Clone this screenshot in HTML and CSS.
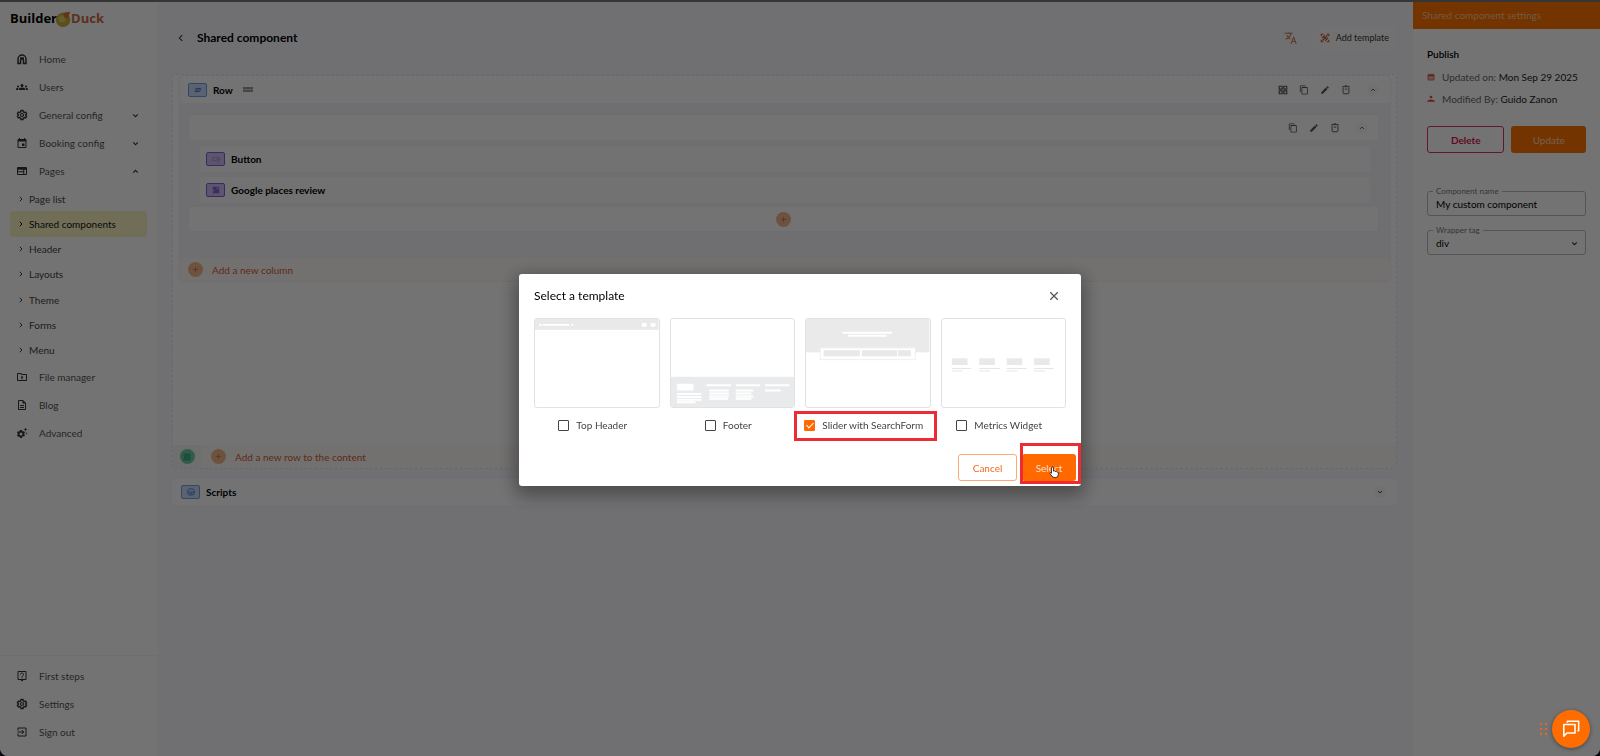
FILE: index.html
```html
<!DOCTYPE html>
<html lang="en">
<head>
<meta charset="utf-8">
<meta name="viewport" content="width=device-width, initial-scale=1">
<title>Builder Duck – Shared component</title>
<link rel="stylesheet" href="styles.css">
</head>
<body>
<svg class="sprite" aria-hidden="true">
  <symbol id="i-home" viewBox="0 0 24 24"><path fill="none" stroke="currentColor" stroke-width="3" d="M9 21H4v-9a8 8 0 0 1 16 0v9h-5v-6a3 3 0 0 0-6 0zM8 10h8"/></symbol>
  <symbol id="i-users" viewBox="0 0 24 24"><path d="M12 12.750c1.630 0 3.070.39 4.240.9 1.080.48 1.760 1.560 1.760 2.730V18H6v-1.610c0-1.180.68-2.260 1.760-2.730 1.170-.52 2.610-.91 4.240-.91zM4 13c1.100 0 2-.9 2-2s-.9-2-2-2-2 .9-2 2 .9 2 2 2zm1.130 1.100C4.760 14.040 4.390 14 4 14c-.99 0-1.930.21-2.780.58A2.010 2.010 0 0 0 0 16.430V18h4.500v-1.610c0-.83.23-1.610.63-2.290zM20 13c1.100 0 2-.9 2-2s-.9-2-2-2-2 .9-2 2 .9 2 2 2zm4 3.430c0-.81-.48-1.530-1.220-1.850A6.950 6.950 0 0 0 20 14c-.39 0-.76.04-1.130.1.4.68.63 1.460.63 2.290V18H24zM12 6c1.660 0 3 1.340 3 3s-1.340 3-3 3-3-1.340-3-3 1.340-3 3-3z"/></symbol>
  <symbol id="i-gear" viewBox="0 0 24 24"><path fill="none" stroke="currentColor" stroke-width="2.800" stroke-linejoin="round" d="M10 3h4l.6 2.800 2 1.200 2.700-.9 2 3.400L19.200 11.400v1.200l2.100 1.900-2 3.400-2.700-.9-2 1.200L14 21h-4l-.6-2.800-2-1.200-2.700.9-2-3.400 2.100-1.900v-1.200L2.700 9.500l2-3.400 2.700.9 2-1.200z"/><circle cx="12" cy="12" r="3" fill="none" stroke="currentColor" stroke-width="2.400"/></symbol>
  <symbol id="i-gears" viewBox="0 0 24 24"><path d="M8 6h4l.5 2.200 1.500.8 2.200-.7 1.800 3-1.600 1.600v1.600l1.600 1.500-1.800 3-2.200-.7-1.500.8L12 22H8l-.5-2.200-1.500-.8-2.200.7-1.800-3 1.600-1.600v-1.600L2 11.300l1.800-3 2.200.7 1.500-.8zM10 11a3 3 0 1 0 0 6 3 3 0 0 0 0-6z" fill-rule="evenodd"/><path d="M19 1l1 3 3 1-3 1-1 3-1-3-3-1 3-1zM21 10l.7 1.800 1.800.7-1.800.7L21 15l-.7-1.800-1.800-.7 1.800-.7z"/></symbol>
  <symbol id="i-calendar" viewBox="0 0 24 24"><path d="M19 4h-1V2h-2v2H8V2H6v2H5a2 2 0 0 0-2 2v14c0 1.100.9 2 2 2h14c1.100 0 2-.9 2-2V6c0-1.100-.9-2-2-2zm0 16H5V9h14zM12 13h5v5h-5z"/></symbol>
  <symbol id="i-date" viewBox="0 0 24 24"><rect x="3" y="4" width="18" height="17" rx="2" fill="currentColor" fill-opacity=".4" stroke="currentColor" stroke-width="2.500"/><path d="M3 8h18" stroke="currentColor" stroke-width="4"/></symbol>
  <symbol id="i-web" viewBox="0 0 24 24"><path fill-rule="evenodd" d="M20 4H4a2 2 0 0 0-2 2v12c0 1.100.9 2 2 2h16c1.100 0 2-.9 2-2V6a2 2 0 0 0-2-2zM4 9.500h10.500v3H4zm0 5h10.500V18H4zM16.500 9.500H20V18h-3.500z"/></symbol>
  <symbol id="i-folder" viewBox="0 0 24 24"><path d="M20 6h-8l-2-2H4a2 2 0 0 0-2 2v12c0 1.100.9 2 2 2h16c1.100 0 2-.9 2-2V8c0-1.100-.9-2-2-2zm0 12H4V6h5.200l2 2H20zm-9-1h2v-4h2l-3-3.500L9 13h2z"/></symbol>
  <symbol id="i-doc" viewBox="0 0 24 24"><path d="M8 16h8v2H8zm0-4h8v2H8zm6-10H6a2 2 0 0 0-2 2v16c0 1.100.89 2 1.990 2H18c1.100 0 2-.9 2-2V8zm4 18H6V4h7v5h5z"/></symbol>
  <symbol id="i-help" viewBox="0 0 24 24"><path d="M19 2H5a2 2 0 0 0-2 2v14a2 2 0 0 0 2 2h4l3 3 3-3h4c1.100 0 2-.9 2-2V4c0-1.100-.9-2-2-2zm0 16H5V4h14zm-8-3.500h2v2h-2z"/><path d="M9 9a3 3 0 1 1 4.500 2.600c-1 .7-1.500 1-1.500 2.200" fill="none" stroke="currentColor" stroke-width="2"/></symbol>
  <symbol id="i-exit" viewBox="0 0 24 24"><path fill="none" stroke="currentColor" stroke-width="2" d="M4 9V4h16v16H4v-5M3 12h12M11.500 8l4 4-4 4"/></symbol>
  <symbol id="i-down" viewBox="0 0 24 24"><path fill="none" stroke="currentColor" stroke-width="3.500" d="M4 8l8 8 8-8"/></symbol>
  <symbol id="i-up" viewBox="0 0 24 24"><path fill="none" stroke="currentColor" stroke-width="3.500" d="M4 16l8-8 8 8"/></symbol>
  <symbol id="i-right" viewBox="0 0 24 24"><path fill="none" stroke="currentColor" stroke-width="4" d="M7 3l9 9-9 9"/></symbol>
  <symbol id="i-left" viewBox="0 0 24 24"><path fill="none" stroke="currentColor" stroke-width="2.500" d="M15 5l-7 7 7 7"/></symbol>
  <symbol id="i-translate" viewBox="0 0 24 24"><path fill="none" stroke="currentColor" stroke-width="1.800" d="M1 4h14M8 2v2M12 4c-1 4-4 8-9 10M5 7c1 3 4 5 6 7M12 22l4.500-11L21 22M14 18h5"/></symbol>
  <symbol id="i-template" viewBox="0 0 24 24"><path fill="none" stroke="currentColor" stroke-width="2.600" d="M3 8V3h5M16 3h5v5M21 16v5h-5M8 21H3v-5M6 18L18 6M5 12l7-7M12 19l7-7M8 8l8 8"/></symbol>
  <symbol id="i-widgets" viewBox="0 0 24 24"><path fill="none" stroke="currentColor" stroke-width="2.800" d="M3 3h7v7H3zM14 3h7v7h-7zM3 14h7v7H3zM14 14h7v7h-7z"/></symbol>
  <symbol id="i-copy" viewBox="0 0 24 24"><path d="M16 1H4a2 2 0 0 0-2 2v14h2V3h12zm3 4H8a2 2 0 0 0-2 2v14c0 1.100.9 2 2 2h11c1.100 0 2-.9 2-2V7c0-1.100-.9-2-2-2zm0 16H8V7h11z"/></symbol>
  <symbol id="i-edit" viewBox="0 0 24 24"><path d="M3 17.250V21h3.750L17.810 9.940l-3.750-3.750zM20.710 7.040a1 1 0 0 0 0-1.410l-2.340-2.340a1 1 0 0 0-1.410 0l-1.830 1.830 3.750 3.750z"/></symbol>
  <symbol id="i-trash" viewBox="0 0 24 24"><path fill="none" stroke="currentColor" stroke-width="2.200" d="M3 4h18M9 2h6M5 6v13a2 2 0 0 0 2 2h10a2 2 0 0 0 2-2V6M9 10h6"/></symbol>
  <symbol id="i-plus" viewBox="0 0 24 24"><path fill="none" stroke="currentColor" stroke-width="2.500" d="M12 3v18M3 12h18"/></symbol>
  <symbol id="i-close" viewBox="0 0 24 24"><path fill="none" stroke="currentColor" stroke-width="3" d="M3 3l18 18M21 3L3 21"/></symbol>
  <symbol id="i-user" viewBox="0 0 24 24"><circle cx="12" cy="6" r="4"/><path d="M0 20c2-9 22-9 24 0z"/></symbol>
</svg>

<div class="app">
  <aside class="sidebar">
    <div class="logo"><span>Builder</span>
      <svg class="logo-duck" viewBox="0 0 20 20" aria-hidden="true"><circle cx="9" cy="11" r="8" fill="#c9b23c"/><circle cx="8" cy="10" r="4" fill="#e0d060"/><path d="M9 3l8-1-3 8-4-2z" fill="#d9763c"/></svg>
      <span class="logo-accent">Duck</span></div>
    <nav class="nav">
      <a class="nav-item" href="#"><svg><use href="#i-home"/></svg><span>Home</span></a>
      <a class="nav-item" href="#"><svg><use href="#i-users"/></svg><span>Users</span></a>
      <a class="nav-item" href="#"><svg><use href="#i-gear"/></svg><span>General config</span><svg class="caret"><use href="#i-down"/></svg></a>
      <a class="nav-item" href="#"><svg><use href="#i-calendar"/></svg><span>Booking config</span><svg class="caret"><use href="#i-down"/></svg></a>
      <a class="nav-item" href="#"><svg><use href="#i-web"/></svg><span>Pages</span><svg class="caret"><use href="#i-up"/></svg></a>
      <div class="subnav">
        <a class="sub-item" href="#"><svg><use href="#i-right"/></svg>Page list</a>
        <a class="sub-item active" href="#"><svg><use href="#i-right"/></svg>Shared components</a>
        <a class="sub-item" href="#"><svg><use href="#i-right"/></svg>Header</a>
        <a class="sub-item" href="#"><svg><use href="#i-right"/></svg>Layouts</a>
        <a class="sub-item" href="#"><svg><use href="#i-right"/></svg>Theme</a>
        <a class="sub-item" href="#"><svg><use href="#i-right"/></svg>Forms</a>
        <a class="sub-item" href="#"><svg><use href="#i-right"/></svg>Menu</a>
      </div>
      <a class="nav-item" href="#"><svg><use href="#i-folder"/></svg><span>File manager</span></a>
      <a class="nav-item" href="#"><svg><use href="#i-doc"/></svg><span>Blog</span></a>
      <a class="nav-item" href="#"><svg><use href="#i-gears"/></svg><span>Advanced</span></a>
    </nav>
    <nav class="nav nav-bottom">
      <a class="nav-item" href="#"><svg><use href="#i-help"/></svg><span>First steps</span></a>
      <a class="nav-item" href="#"><svg><use href="#i-gear"/></svg><span>Settings</span></a>
      <a class="nav-item" href="#"><svg><use href="#i-exit"/></svg><span>Sign out</span></a>
    </nav>
  </aside>

  <main class="main">
    <header class="page-head">
      <button class="icon-btn" aria-label="Back"><svg><use href="#i-left"/></svg></button>
      <h1 class="page-title">Shared component</h1>
      <button class="icon-btn translate" aria-label="Translate"><svg><use href="#i-translate"/></svg></button>
      <button class="add-template"><svg><use href="#i-template"/></svg>Add template</button>
    </header>

    <section class="canvas">
      <div class="row-card">
        <div class="row-head">
          <span class="badge blue"><svg viewBox="0 0 10 10"><path d="M2 3h7M1 5h8M1 7h6" stroke="currentColor" stroke-width="1.200"/></svg></span>
          <strong>Row</strong>
          <span class="handle"></span>
          <div class="tools">
            <button class="icon-btn" aria-label="Components"><svg><use href="#i-widgets"/></svg></button>
            <button class="icon-btn" aria-label="Copy row"><svg><use href="#i-copy"/></svg></button>
            <button class="icon-btn" aria-label="Edit row"><svg><use href="#i-edit"/></svg></button>
            <button class="icon-btn" aria-label="Delete row"><svg><use href="#i-trash"/></svg></button>
            <button class="icon-btn fold" aria-label="Collapse row"><svg><use href="#i-up"/></svg></button>
          </div>
        </div>
        <div class="row-body">
          <div class="column">
            <div class="column-head">
              <div class="tools">
                <button class="icon-btn" aria-label="Copy column"><svg><use href="#i-copy"/></svg></button>
                <button class="icon-btn" aria-label="Edit column"><svg><use href="#i-edit"/></svg></button>
                <button class="icon-btn" aria-label="Delete column"><svg><use href="#i-trash"/></svg></button>
                <button class="icon-btn fold" aria-label="Collapse column"><svg><use href="#i-up"/></svg></button>
              </div>
            </div>
            <div class="column-body">
              <div class="item"><span class="badge purple light"><svg viewBox="0 0 10 10"><path d="M5 7H1V3h8v3M6 5l1 4 1-2 2-1z" fill="none" stroke="currentColor"/></svg></span><strong>Button</strong></div>
              <div class="item"><span class="badge purple"><svg viewBox="0 0 10 10"><path d="M1 1h5v4H1zM4 4h5v5H4zM1 6h3v3H1zM7 1h2v2H7z" fill="currentColor"/></svg></span><strong>Google places review</strong></div>
            </div>
            <div class="column-add"><button class="plus" aria-label="Add component"><svg><use href="#i-plus"/></svg></button></div>
          </div>
        </div>
        <div class="add-bar column-bar"><button class="add-link"><span class="plus"><svg><use href="#i-plus"/></svg></span>Add a new column</button></div>
      </div>
      <div class="add-bar canvas-bar">
        <span class="green-cell"><button class="plus green" aria-label="Add from library"><svg><use href="#i-widgets"/></svg></button></span>
        <button class="add-link"><span class="plus"><svg><use href="#i-plus"/></svg></span>Add a new row to the content</button>
      </div>
    </section>

    <section class="scripts">
      <span class="badge blue"><svg viewBox="0 0 10 10"><path d="M1 3a4 2 0 0 1 8 0v4a4 2 0 0 1-8 0zM1 5h8M3 7h4" fill="none" stroke="currentColor"/></svg></span>
      <strong>Scripts</strong>
      <button class="icon-btn fold" aria-label="Expand scripts"><svg><use href="#i-down"/></svg></button>
    </section>
  </main>

  <aside class="settings">
    <div class="settings-head">Shared component settings</div>
    <div class="settings-body">
      <h2 class="settings-title">Publish</h2>
      <p class="meta"><svg><use href="#i-date"/></svg><span>Updated on: <b>Mon Sep 29 2025</b></span></p>
      <p class="meta"><svg><use href="#i-user"/></svg><span>Modified By: <b>Guido Zanon</b></span></p>
      <div class="settings-actions">
        <button class="btn danger">Delete</button>
        <button class="btn primary">Update</button>
      </div>
      <div class="field"><label for="cname">Component name</label><input id="cname" type="text" value="My custom component"></div>
      <div class="field"><label for="wtag">Wrapper tag</label><select id="wtag"><option>div</option></select><svg class="field-caret"><use href="#i-down"/></svg></div>
    </div>
  </aside>
</div>

<div class="backdrop">
  <div class="dialog" role="dialog" aria-modal="true" aria-labelledby="dlg-title">
    <div class="dialog-head">
      <h2 class="dialog-title" id="dlg-title">Select a template</h2>
      <button class="icon-btn close" aria-label="Close"><svg><use href="#i-close"/></svg></button>
    </div>
    <div class="templates">
      <div class="template">
        <svg class="thumb" viewBox="0 0 126 90" aria-hidden="true"><rect width="126" height="11" fill="#e9e9e9"/><path d="M4 6h3M8 6h27M37 6h2" stroke="#fff" stroke-width="2"/><rect x="109" y="4" width="5" height="4" rx="1" fill="#fff"/><rect x="118" y="4" width="5" height="4" rx="1" fill="#fff"/></svg>
        <label class="choice"><input type="checkbox">Top Header</label>
      </div>
      <div class="template">
        <svg class="thumb" viewBox="0 0 126 90" aria-hidden="true"><rect y="59" width="126" height="31" fill="#e8eaeb"/><rect x="6" y="66" width="17" height="7" rx="1" fill="#fff"/><path d="M6 76.500h25M6 79.500h25M6 82.500h25M6 85h19M36 67.500h25M39 73h20M39 76h20M39 79h20M39 81.500h19M66 67.500h25M66 73h18M66 76h16M66 79h18M66 81.500h16M96 67.500h25M96 73h16" stroke="#fff" stroke-width="2"/></svg>
        <label class="choice"><input type="checkbox">Footer</label>
      </div>
      <div class="template">
        <svg class="thumb" viewBox="0 0 126 90" aria-hidden="true"><rect width="126" height="34" fill="#eaeaea"/><path d="M37 14h51M43 17h39" stroke="#fff" stroke-width="2"/><rect x="14.500" y="29.500" width="97" height="12" fill="#fff" stroke="#eee"/><path d="M18 35h37M57 35h36M94 35h13" stroke="#e8e8e8" stroke-width="6"/></svg>
        <label class="choice marked"><input type="checkbox" checked>Slider with SearchForm</label>
      </div>
      <div class="template">
        <svg class="thumb" viewBox="0 0 126 90" aria-hidden="true"><path d="M10 43.500h16M38 43.500h16M66 43.500h16M94 43.500h16" stroke="#e9e9e9" stroke-width="7"/><path d="M10 50.500h20M10 53h11M38 50.500h21M38 53h11M66 50.500h20M66 53h11M94 50.500h20M94 53h11" stroke="#e4e4e4"/></svg>
        <label class="choice"><input type="checkbox">Metrics Widget</label>
      </div>
    </div>
    <div class="dialog-actions">
      <button class="btn outline">Cancel</button>
      <button class="btn primary select-btn">Select
        <svg class="cursor" viewBox="0 0 16 18" aria-hidden="true"><path d="M5 10V2.500a1.500 1.500 0 0 1 3 0V7q2-1 2.500.5 2-.7 2.300.7Q15 8 15 9.500V12q0 4.500-4.500 4.500Q7 16.500 5.500 14L2.500 10q1-1.800 2.500 0z" fill="#fff" stroke="#111" stroke-width="1.200"/></svg>
      </button>
    </div>
  </div>
</div>

<div class="chat">
  <span class="chat-grip"><i></i><i></i><i></i><i></i><i></i><i></i></span>
  <button class="chat-btn" aria-label="Open chat"><svg viewBox="0 0 20 20"><path d="M6 3V1.500h12.500V12H17M2 5h12.500v9.500H5.500L2 18z" fill="none" stroke="#fff" stroke-width="1.700" stroke-linejoin="round"/></svg></button>
</div>
</body>
</html>
```

FILE: styles.css
```css
* { box-sizing: border-box; }
html { background: #10151f; }
body {
  margin: 0;
  font-family: Lato, "Liberation Sans", sans-serif;
  font-size: 10px;
  line-height: 14px;
  color: #333;
}
svg { width: 12px; height: 12px; fill: currentColor; flex: none; display: block; }
.sprite { display: none; }
button {
  font: inherit;
  color: inherit;
  background: none;
  border: 0;
  padding: 0;
  cursor: pointer;
  display: flex;
  align-items: center;
  justify-content: center;
}
a { color: inherit; text-decoration: none; }
h1, h2, p { margin: 0; }
strong { color: #000; font-weight: 700; font-size: 10px; }

.app {
  display: flex;
  min-height: 100vh;
  background: #f8f8fc;
  border-top: 2px solid #777;
  border-radius: 0 0 8px 8px;
  overflow: hidden;
}

/* Sidebar */
.sidebar {
  width: 158px;
  flex: none;
  background: #fff;
  display: flex;
  flex-direction: column;
}
.logo {
  display: flex;
  align-items: center;
  height: 32px;
  padding-left: 10px;
  margin-bottom: 11px;
  font: 700 13px/20px "Open Sans", sans-serif;
  color: #000;
}
.logo-duck { width: 18px; height: 20px; margin: 2px -2px 0 -2px; }
.logo-accent { color: #c96a48; }
.nav { display: flex; flex-direction: column; }
.nav-item {
  display: flex;
  align-items: center;
  height: 28px;
  padding: 0 19px 0 16px;
  gap: 11px;
  color: #555;
}
.nav-item .caret { width: 7px; height: 7px; margin-left: auto; }
.nav-item svg { color: #333; }
.subnav {
  display: grid;
  grid-auto-rows: 1fr;
  min-height: 178px;
  padding-top: 1px;
}
.sub-item {
  display: flex;
  align-items: center;
  gap: 5px;
  margin: 0 11px 0 10px;
  padding-left: 8px;
  border-radius: 3px;
  color: #444;
}
.sub-item svg { width: 6px; height: 6px; }
.sub-item.active { background: #faf3c4; color: #111; }
.nav-bottom {
  margin-top: auto;
  padding: 6px 0 10px;
  border-top: 1px solid #f4f4f4;
}

/* Main column */
.main { flex: 1; min-width: 0; padding: 0 16px 0 14px; }
.page-head {
  display: flex;
  align-items: center;
  height: 72px;
  padding-left: 4px;
}
.page-title { font-size: 12px; line-height: 16px; color: #000; margin-left: 11px; }
.page-head .icon-btn svg { width: 10px; height: 10px; }
.page-head .translate { margin-left: auto; color: #c47a50; }
.page-head .translate svg { width: 14px; height: 14px; }
.add-template {
  margin-left: 15px;
  height: 24px;
  padding: 0 8px 0 7px;
  gap: 6px;
  font-size: 9px;
  background: #fbfbfd;
  border-radius: 3px;
}
.add-template svg { width: 10px; height: 10px; color: #c65a2e; }

.canvas {
  display: flex;
  flex-direction: column;
  min-height: 395px;
  background: #fff;
  border: 1px dashed #e6e6f0;
  border-radius: 4px;
}
.row-card { margin: 0 5px 0 6px; border: 1px solid #f3f3f8; border-radius: 4px; }
.row-head {
  display: flex;
  align-items: center;
  height: 27px;
  padding: 0 11px 0 8px;
}
.badge {
  display: flex;
  align-items: center;
  justify-content: center;
  width: 19px;
  height: 14px;
  margin-right: 6px;
  border: 1px solid #6f9be8;
  border-radius: 2px;
  background: #c9dcfb;
  color: #3d6fd8;
}
.badge svg { width: 8px; height: 8px; }
.badge.purple { background: #cdbcf2; border-color: #8460dd; color: #8460dd; }
.badge.light svg { color: #a78be4; }
.handle { width: 10px; height: 5px; margin-left: 10px; border: solid #999; border-width: 2px 0; background: #ccc; }
.tools { display: flex; align-items: center; gap: 11px; margin-left: auto; color: #555; }
.tools .icon-btn svg { width: 10px; height: 10px; }
.icon-btn.fold {
  width: 12px;
  height: 12px;
  margin-left: 5px;
  border-radius: 6px;
  background: #f8f8fa;
}
.tools .icon-btn.fold svg, .icon-btn.fold svg { width: 6px; height: 6px; }
.row-body { background: #f7f7fb; padding: 11px 11px 26px 8px; }
.column { border: 1px solid #f3f3f8; border-radius: 3px; background: #fff; }
.column-head { display: flex; align-items: center; height: 25px; padding: 0 10px; }
.column-body {
  display: grid;
  gap: 5px;
  padding: 6px 8px 4px 11px;
  background: #f7f7fb;
}
.item {
  display: flex;
  align-items: center;
  height: 26px;
  padding-left: 6px;
  background: #fdfdfd;
  border-radius: 3px;
}
.item .badge { margin-right: 6px; }
.column-add { display: flex; align-items: center; justify-content: center; height: 24px; }
.plus {
  display: flex;
  align-items: center;
  justify-content: center;
  width: 15px;
  height: 15px;
  border-radius: 8px;
  background: #f2b98c;
  color: #d0683c;
}
.plus svg { width: 7px; height: 7px; }
.plus.green { background: #6fcba6; color: #2b9f72; }
.plus.green svg { width: 8px; height: 8px; }
.add-bar { display: flex; align-items: center; height: 23px; background: #fffaf5; }
.column-bar { padding-left: 8px; }
.add-link { gap: 9px; color: #d1603a; }
.canvas-bar { margin-top: auto; }
.green-cell {
  display: flex;
  align-items: center;
  justify-content: center;
  width: 28px;
  height: 23px;
  margin-right: 10px;
  background: #f1f8f4;
}
.scripts {
  display: flex;
  align-items: center;
  height: 26px;
  margin-top: 10px;
  padding: 0 11px 0 9px;
  background: #fff;
  border-radius: 4px;
}
.scripts .fold { margin-left: auto; }

/* Settings panel */
.settings { width: 187px; flex: none; background: #fff; }
.settings-head {
  height: 27px;
  padding: 6px 9px;
  background: #ff7300;
  color: #ffc59a;
}
.settings-body { padding: 18px 14px; }
.settings-title { font-size: 10px; line-height: 14px; color: #000; margin-bottom: 5px; font-weight: 600; }
.meta { display: flex; align-items: center; gap: 7px; height: 22px; color: #666; }
.meta span { white-space: nowrap; }
.meta b { font-weight: 400; color: #222; }
.meta svg { width: 8px; height: 8px; color: #d6503a; }
.meta + .meta { margin-bottom: 16px; }
.settings-actions { display: grid; grid-template-columns: 26fr 25fr; gap: 7px; margin-bottom: 38px; }
.btn {
  height: 27px;
  border-radius: 3px;
  font-size: 10px;
}
.btn.danger { border: 1px solid #d8365c; color: #d8164a; font-weight: 700; }
.btn.primary { background: #ff7300; color: #ffd8b8; }
.btn.outline { border: 1px solid #ffa873; color: #f06a1e; }
.field { position: relative; margin-bottom: 14px; }
.field label {
  position: absolute;
  top: -5px;
  left: 6px;
  padding: 0 3px;
  font-size: 8px;
  line-height: 10px;
  color: #777;
  background: #fff;
}
.field input, .field select {
  display: block;
  width: 100%;
  height: 25px;
  padding: 0 8px;
  border: 1px solid #bbb;
  border-radius: 3px;
  background: none;
  appearance: none;
  font: 10px/14px Lato, sans-serif;
  color: #000;
}
.field-caret { position: absolute; right: 8px; top: 10px; width: 7px; height: 7px; }

/* Template dialog */
.backdrop {
  position: fixed;
  inset: 0;
  padding-top: 4px;
  display: flex;
  align-items: center;
  justify-content: center;
  background: rgba(0, 0, 0, .55);
}
.dialog {
  width: 562px;
  max-width: 96%;
  padding: 14px 5px 5px 15px;
  background: #fff;
  border-radius: 3px;
  box-shadow: 0 6px 18px 4px rgba(0, 0, 0, .35);
}
.dialog-head {
  display: flex;
  align-items: center;
  justify-content: space-between;
  height: 16px;
  margin: 0 17px 14px 0;
}
.dialog-title { font-size: 12px; line-height: 16px; font-weight: 400; color: #000; }
.close svg { width: 10px; height: 10px; color: #555; }
.templates {
  display: grid;
  grid-template-columns: repeat(4, minmax(0, 1fr));
  gap: 10px;
  margin-right: 10px;
}
.template { display: flex; flex-direction: column; align-items: center; }
.thumb {
  width: 100%;
  height: auto;
  border: 1px solid #e2e2e2;
  border-radius: 3px;
}
.choice {
  position: relative;
  display: flex;
  align-items: center;
  gap: 7px;
  height: 34px;
  margin-right: 8px;
  white-space: nowrap;
  color: #444;
}
.choice input {
  appearance: none;
  position: relative;
  width: 11px;
  height: 11px;
  margin: 0;
  border: 1px solid #444;
  border-radius: 1px;
}
.choice input:checked { background: #ff6900; border-color: #ff6900; }
.choice input:checked::after {
  content: "";
  position: absolute;
  left: 3px;
  top: 0;
  width: 3px;
  height: 6px;
  border: solid #fff;
  border-width: 0 1px 1px 0;
  transform: rotate(45deg);
}
.marked::before {
  content: "";
  position: absolute;
  inset: 3px -14px 1px -10px;
  border: 3px solid #ee2b30;
}
.dialog-actions { display: flex; justify-content: flex-end; gap: 5px; margin-top: 12px; }
.dialog-actions .btn { width: 59px; }
.dialog-actions .select-btn { position: relative; width: 54px; background: #ff6900; color: #ffe0c8; }
.select-btn::before {
  content: "";
  position: absolute;
  inset: -11px -5px -3px -2px;
  border: 3px solid #ee2b30;
}
.cursor { position: absolute; left: 26px; top: 12px; width: 11px; height: 13px; }

/* Chat launcher */
.chat { position: fixed; right: 10px; bottom: 8px; display: flex; align-items: center; gap: 5px; }
.chat-grip { display: grid; grid-template-columns: 2px 2px; gap: 3px; }
.chat-grip i { width: 2px; height: 2px; background: #e0662a; }
.chat-btn { width: 38px; height: 38px; border-radius: 19px; background: #ff6d00; box-shadow: 0 1px 4px rgba(0, 0, 0, .4); }
.chat-btn svg { width: 18px; height: 18px; }
```
